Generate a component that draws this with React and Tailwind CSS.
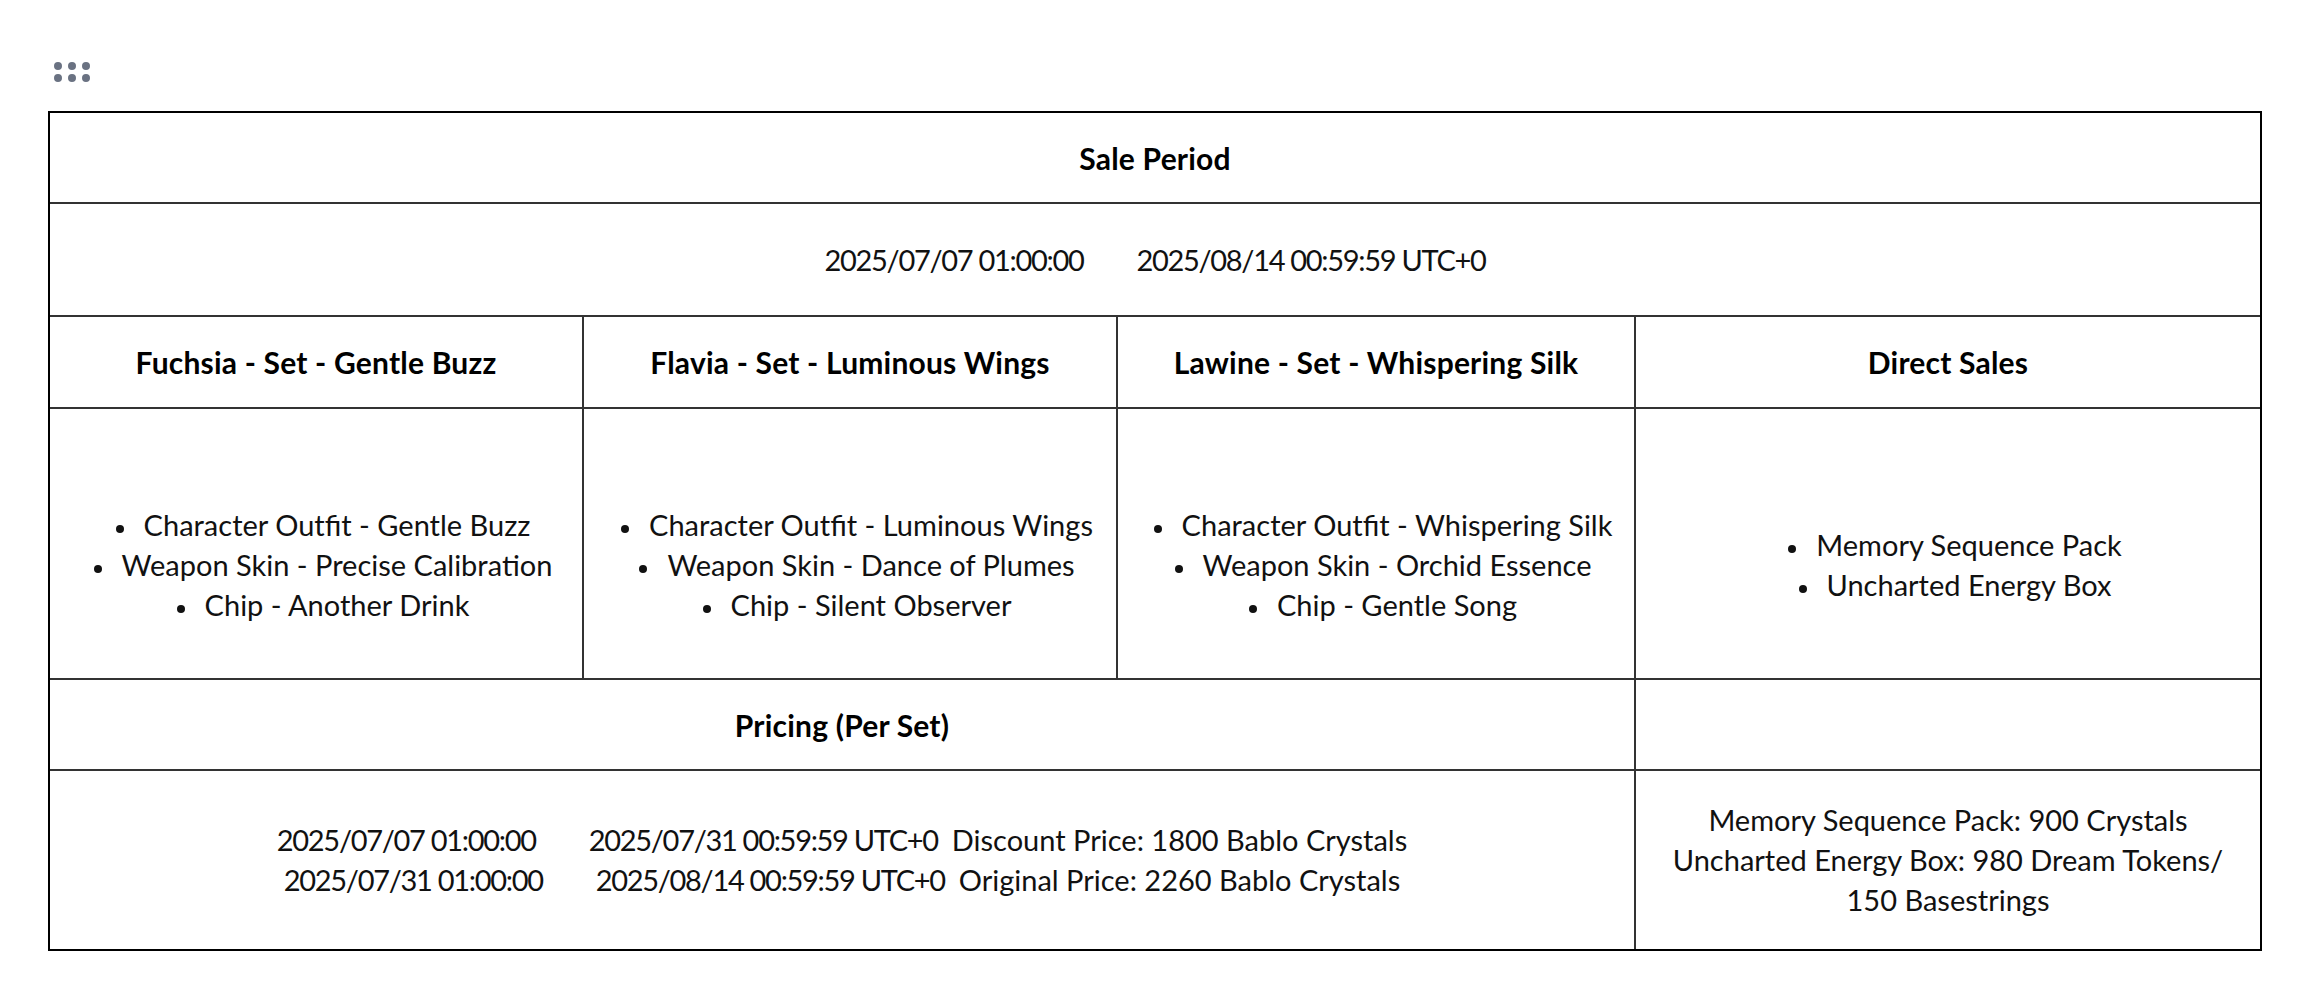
import React from 'react';
import { GripHorizontal } from 'lucide-react';

const sets = [
  {
    title: 'Fuchsia - Set - Gentle Buzz',
    items: ['Character Outfit - Gentle Buzz', 'Weapon Skin - Precise Calibration', 'Chip - Another Drink'],
  },
  {
    title: 'Flavia - Set - Luminous Wings',
    items: ['Character Outfit - Luminous Wings', 'Weapon Skin - Dance of Plumes', 'Chip - Silent Observer'],
  },
  {
    title: 'Lawine - Set - Whispering Silk',
    items: ['Character Outfit - Whispering Silk', 'Weapon Skin - Orchid Essence', 'Chip - Gentle Song'],
  },
];

const directItems = ['Memory Sequence Pack', 'Uncharted Energy Box'];

// date range: start, wide gap, end
function Period({ from, to }) {
  return (
    <span className="tracking-[-1.3px]">
      {from}
      <span className="inline-block w-[53px]" />
      {to}
    </span>
  );
}

function ItemList({ items }) {
  return (
    <ul className="pl-[14px]">
      {items.map((item) => (
        <li key={item}>
          <span className="inline-block w-[8px] h-[8px] rounded-full bg-[#111] mr-[20px] align-middle" />
          {item}
        </li>
      ))}
    </ul>
  );
}

export default function App() {
  const cell = 'border-2 border-[#333] text-center align-middle p-0';
  const head = `${cell} font-bold text-black text-[30px] tracking-[0.2px]`;

  return (
    <div className="min-h-screen bg-white pt-[48px] pl-[48px] text-[#111] font-['Lato',sans-serif] text-[29px] leading-[40px]">
      <GripHorizontal size={48} className="text-gray-500" />

      <div className="mt-[15px] w-[2214px] border-2 border-black">
        <table className="w-full table-fixed border-collapse border-hidden">
          <colgroup>
            <col className="w-[533px]" />
            <col className="w-[534px]" />
            <col className="w-[518px]" />
            <col className="w-[625px]" />
          </colgroup>
          <tbody>
            <tr className="h-[90px]">
              <th colSpan={4} className={head}>
                Sale Period
              </th>
            </tr>
            <tr className="h-[113px]">
              <td colSpan={4} className={cell}>
                <Period from="2025/07/07 01:00:00" to="2025/08/14 00:59:59 UTC+0" />
              </td>
            </tr>
            <tr className="h-[92px]">
              {sets.map((s) => (
                <th key={s.title} className={head}>
                  {s.title}
                </th>
              ))}
              <th className={head}>Direct Sales</th>
            </tr>
            <tr className="h-[271px]">
              {sets.map((s) => (
                <td key={s.title} className={`${cell} pt-[43px]`}>
                  <ItemList items={s.items} />
                </td>
              ))}
              <td className={`${cell} pt-[43px]`}>
                <ItemList items={directItems} />
              </td>
            </tr>
            <tr className="h-[91px]">
              <th colSpan={3} className={head}>
                Pricing (Per Set)
              </th>
              <td className={cell} />
            </tr>
            <tr className="h-[179px]">
              <td colSpan={3} className={cell}>
                <div>
                  <Period from="2025/07/07 01:00:00" to="2025/07/31 00:59:59 UTC+0" />
                  <span className="inline-block w-[14px]" />Discount Price: 1800 Bablo Crystals
                </div>
                <div>
                  <Period from="2025/07/31 01:00:00" to="2025/08/14 00:59:59 UTC+0" />
                  <span className="inline-block w-[14px]" />Original Price: 2260 Bablo Crystals
                </div>
              </td>
              <td className={cell}>
                Memory Sequence Pack: 900 Crystals
                <br />
                Uncharted Energy Box: 980 Dream Tokens/
                <br />
                150 Basestrings
              </td>
            </tr>
          </tbody>
        </table>
      </div>
    </div>
  );
}
